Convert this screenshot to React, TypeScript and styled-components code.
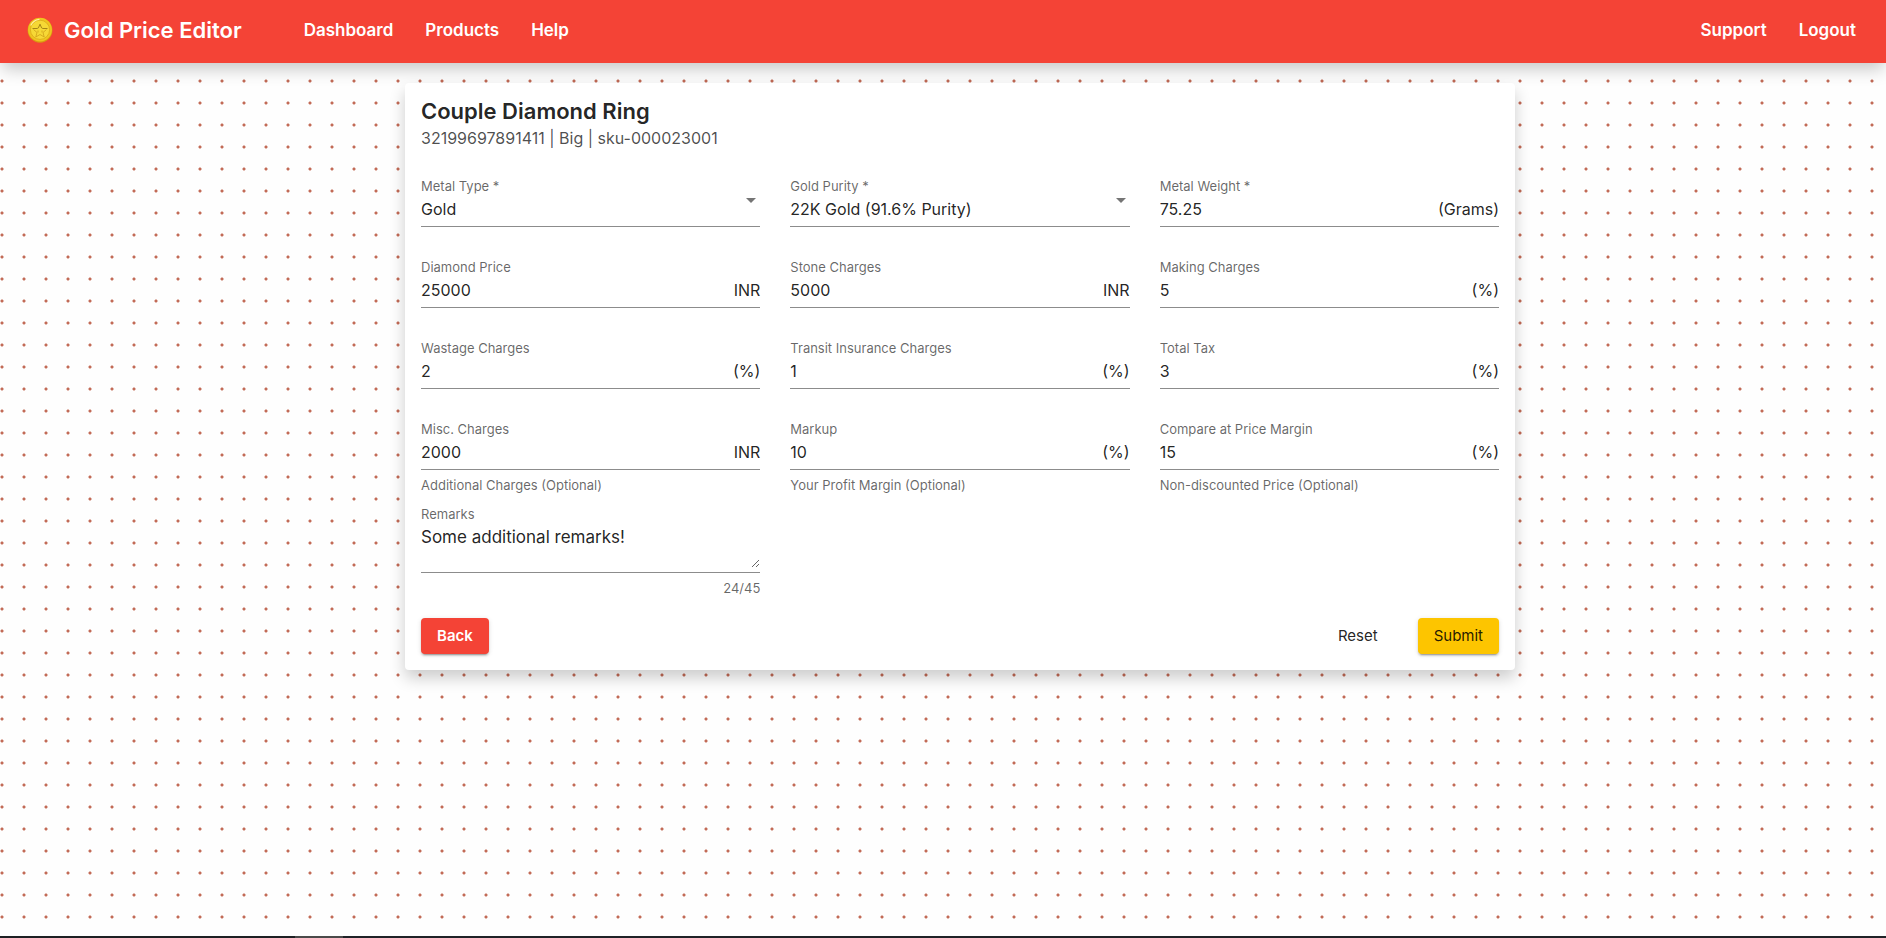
import React, { useState } from "react";
import styled, { createGlobalStyle } from "styled-components";

const GlobalStyle = createGlobalStyle`
  *, *::before, *::after { box-sizing: border-box; }
  body {
    margin: 0;
    font-family: Inter, "Open Sans", sans-serif;
    color: rgba(0, 0, 0, 0.87);
  }
  input, select, textarea, button { font-family: inherit; color: inherit; }
`;

const Page = styled.div`
  min-height: 100vh;
  display: flex;
  flex-direction: column;
  background-color: #fefefe;
  background-image: radial-gradient(circle at 2px 15px, #c26a56 1px, rgba(194, 106, 86, 0) 2px);
  background-size: 22px 22px;
`;

const Header = styled.header`
  display: flex;
  align-items: center;
  height: 63px;
  padding: 0 30px 3px 27px;
  background: #f44336;
  color: #fff;
  box-shadow: 0 8px 16px -2px rgba(0, 0, 0, 0.22);
`;

const Brand = styled.a`
  display: flex;
  align-items: center;
  gap: 11px;
  margin-right: 62px;
  color: inherit;
  font-size: 22px;
  font-weight: 600;
  line-height: 24px;
  text-decoration: none;
`;

const Nav = styled.nav<{ $end?: boolean }>`
  display: flex;
  gap: 32px;
  margin-left: ${(p) => (p.$end ? "auto" : "0")};
`;

const NavLink = styled.a`
  color: inherit;
  font-size: 17px;
  font-weight: 600;
  line-height: 24px;
  text-decoration: none;
`;

const Main = styled.main`
  flex: 1;
  padding: 20px 0 20px 34px;
`;

const Card = styled.form`
  width: 100%;
  max-width: 1110px;
  margin: 0 auto;
  padding: 16px;
  border-radius: 4px;
  background: #fff;
  box-shadow: 0 8px 16px rgba(0, 0, 0, 0.2);
`;

const Title = styled.h1`
  margin: 0;
  font-size: 22px;
  font-weight: 600;
  line-height: 24px;
`;

const Subtitle = styled.p`
  margin: 3px 0 28px;
  color: rgba(0, 0, 0, 0.7);
  font-size: 16px;
  line-height: 24px;
`;

const Fields = styled.div`
  display: grid;
  grid-template-columns: repeat(3, 1fr);
  column-gap: 30px;
  row-gap: 10px;
`;

const FieldBox = styled.div`
  display: flex;
  flex-direction: column;
  min-width: 0;
`;

const Label = styled.label`
  color: rgba(0, 0, 0, 0.6);
  font-size: 13px;
  line-height: 16px;
`;

const Control = styled.div`
  position: relative;
  display: flex;
  align-items: center;
  height: 33px;
  padding: 4px 0 7px;
  border-bottom: 1px solid rgba(0, 0, 0, 0.45);
  font-size: 16px;
`;

const Input = styled.input`
  flex: 1;
  min-width: 0;
  padding: 0;
  border: 0;
  outline: 0;
  background: none;
  font-size: 16px;
  line-height: 20px;
`;

const Select = styled.select`
  flex: 1;
  min-width: 0;
  padding: 0;
  border: 0;
  outline: 0;
  appearance: none;
  background: none;
  font-size: 16px;
  line-height: 20px;
`;

const Arrow = styled.svg`
  position: absolute;
  top: 4px;
  right: 4px;
  fill: rgba(0, 0, 0, 0.54);
  pointer-events: none;
`;

const Hint = styled.div<{ $end?: boolean }>`
  height: 22px;
  padding-top: 7px;
  color: rgba(0, 0, 0, 0.6);
  font-size: 13px;
  line-height: 16px;
  text-align: ${(p) => (p.$end ? "right" : "left")};
`;

const RemarksRow = styled(Fields)`
  margin-top: 14px;
`;

const RemarksControl = styled.div`
  display: flex;
  padding: 4px 0;
  border-bottom: 1px solid rgba(0, 0, 0, 0.45);
`;

const Textarea = styled.textarea`
  flex: 1;
  min-width: 0;
  height: 42px;
  padding: 1px 0;
  border: 0;
  outline: 0;
  background: none;
  font-size: 17px;
  line-height: 20px;
  resize: vertical;
`;

const Actions = styled.div`
  display: flex;
  align-items: center;
  margin-top: 23px;
`;

const ActionGroup = styled.div`
  display: flex;
  gap: 24px;
  margin-left: auto;
`;

const Button = styled.button<{ $kind: "back" | "plain" | "submit" }>`
  height: 36px;
  padding: 0 16px;
  border: 0;
  border-radius: 4px;
  font-size: 15px;
  font-weight: ${(p) => (p.$kind === "back" ? 600 : 400)};
  line-height: 36px;
  cursor: pointer;
  background: ${(p) => ({ back: "#f44336", plain: "transparent", submit: "#fdc500" })[p.$kind]};
  color: ${(p) => (p.$kind === "back" ? "#fff" : "rgba(0, 0, 0, 0.87)")};
  box-shadow: ${(p) =>
    p.$kind === "plain"
      ? "none"
      : "0 3px 1px -2px rgba(0,0,0,.2), 0 2px 2px 0 rgba(0,0,0,.14), 0 1px 5px 0 rgba(0,0,0,.12)"};
`;

const BottomEdge = styled.footer`
  height: 2px;
  background: linear-gradient(90deg, #1d2023 295px, #4a4a4a 295px, #4a4a4a 343px, #1f2227 343px);
`;

const Coin = () => (
  <svg width="26" height="26" viewBox="0 0 26 26" aria-hidden="true">
    <circle cx="13" cy="13.300" r="12.400" fill="#d99a10" />
    <circle cx="13" cy="12.700" r="11.900" fill="#f0c420" />
    <circle cx="13" cy="12.800" r="9.600" fill="#f6d836" stroke="#dba91a" strokeWidth="0.8" />
    <path d="M5.500 11.500h4.700l1.200-.6L13 7.200l1.600 3.700 1.200.6h4.700" fill="none" stroke="#9c7a14" strokeWidth="0.9" />
    <path
      d="M6.500 12.500l3.500 3-1.200 4.500L13 17.500l4.200 2.500-1.200-4.500 3.500-3M11 13.500v2M15 13.500v2"
      fill="none"
      stroke="#d3a51c"
      strokeWidth="0.9"
    />
    <path d="M4 8a10.500 10.500 0 0 1 8-5.700" fill="none" stroke="#fff3a0" strokeWidth="1.2" strokeLinecap="round" />
  </svg>
);

interface FieldSpec {
  id: string;
  label: string;
  value: string;
  unit?: string;
  hint?: string;
  options?: string[];
}

const fields: FieldSpec[] = [
  { id: "metal", label: "Metal Type *", value: "Gold", options: ["Gold", "Silver", "Platinum"] },
  {
    id: "purity",
    label: "Gold Purity *",
    value: "22K Gold (91.6% Purity)",
    options: ["24K Gold (99.9% Purity)", "22K Gold (91.6% Purity)", "18K Gold (75.0% Purity)"],
  },
  { id: "weight", label: "Metal Weight *", value: "75.25", unit: "(Grams)" },
  { id: "diamond", label: "Diamond Price", value: "25000", unit: "INR" },
  { id: "stone", label: "Stone Charges", value: "5000", unit: "INR" },
  { id: "making", label: "Making Charges", value: "5", unit: "(%)" },
  { id: "wastage", label: "Wastage Charges", value: "2", unit: "(%)" },
  { id: "transit", label: "Transit Insurance Charges", value: "1", unit: "(%)" },
  { id: "tax", label: "Total Tax", value: "3", unit: "(%)" },
  { id: "misc", label: "Misc. Charges", value: "2000", unit: "INR", hint: "Additional Charges (Optional)" },
  { id: "markup", label: "Markup", value: "10", unit: "(%)", hint: "Your Profit Margin (Optional)" },
  { id: "compare", label: "Compare at Price Margin", value: "15", unit: "(%)", hint: "Non-discounted Price (Optional)" },
];

const Field = ({ id, label, value, unit, hint, options }: FieldSpec) => (
  <FieldBox>
    <Label htmlFor={id}>{label}</Label>
    <Control>
      {options ? (
        <>
          <Select id={id} defaultValue={value}>
            {options.map((o) => (
              <option key={o}>{o}</option>
            ))}
          </Select>
          <Arrow width="10" height="5" viewBox="0 0 10 5">
            <path d="M0 0h10L5 5z" />
          </Arrow>
        </>
      ) : (
        <Input id={id} defaultValue={value} />
      )}
      {unit && <span>{unit}</span>}
    </Control>
    <Hint>{hint}</Hint>
  </FieldBox>
);

export default function App() {
  const [remarks, setRemarks] = useState("Some additional remarks!");
  return (
    <>
      <GlobalStyle />
      <Page>
        <Header>
          <Brand href="#">
            <Coin />
            Gold Price Editor
          </Brand>
          <Nav>
            <NavLink href="#dashboard">Dashboard</NavLink>
            <NavLink href="#products">Products</NavLink>
            <NavLink href="#help">Help</NavLink>
          </Nav>
          <Nav $end>
            <NavLink href="#support">Support</NavLink>
            <NavLink href="#logout">Logout</NavLink>
          </Nav>
        </Header>
        <Main>
          <Card onSubmit={(e) => e.preventDefault()}>
            <Title>Couple Diamond Ring</Title>
            <Subtitle>32199697891411 | Big | sku-000023001</Subtitle>
            <Fields>
              {fields.map((f) => (
                <Field key={f.id} {...f} />
              ))}
            </Fields>
            <RemarksRow>
              <FieldBox>
                <Label htmlFor="remarks">Remarks</Label>
                <RemarksControl>
                  <Textarea
                    id="remarks"
                    maxLength={45}
                    value={remarks}
                    onChange={(e) => setRemarks(e.target.value)}
                  />
                </RemarksControl>
                <Hint $end>{remarks.length}/45</Hint>
              </FieldBox>
            </RemarksRow>
            <Actions>
              <Button type="button" $kind="back">
                Back
              </Button>
              <ActionGroup>
                <Button type="reset" $kind="plain">
                  Reset
                </Button>
                <Button type="submit" $kind="submit">
                  Submit
                </Button>
              </ActionGroup>
            </Actions>
          </Card>
        </Main>
        <BottomEdge />
      </Page>
    </>
  );
}
